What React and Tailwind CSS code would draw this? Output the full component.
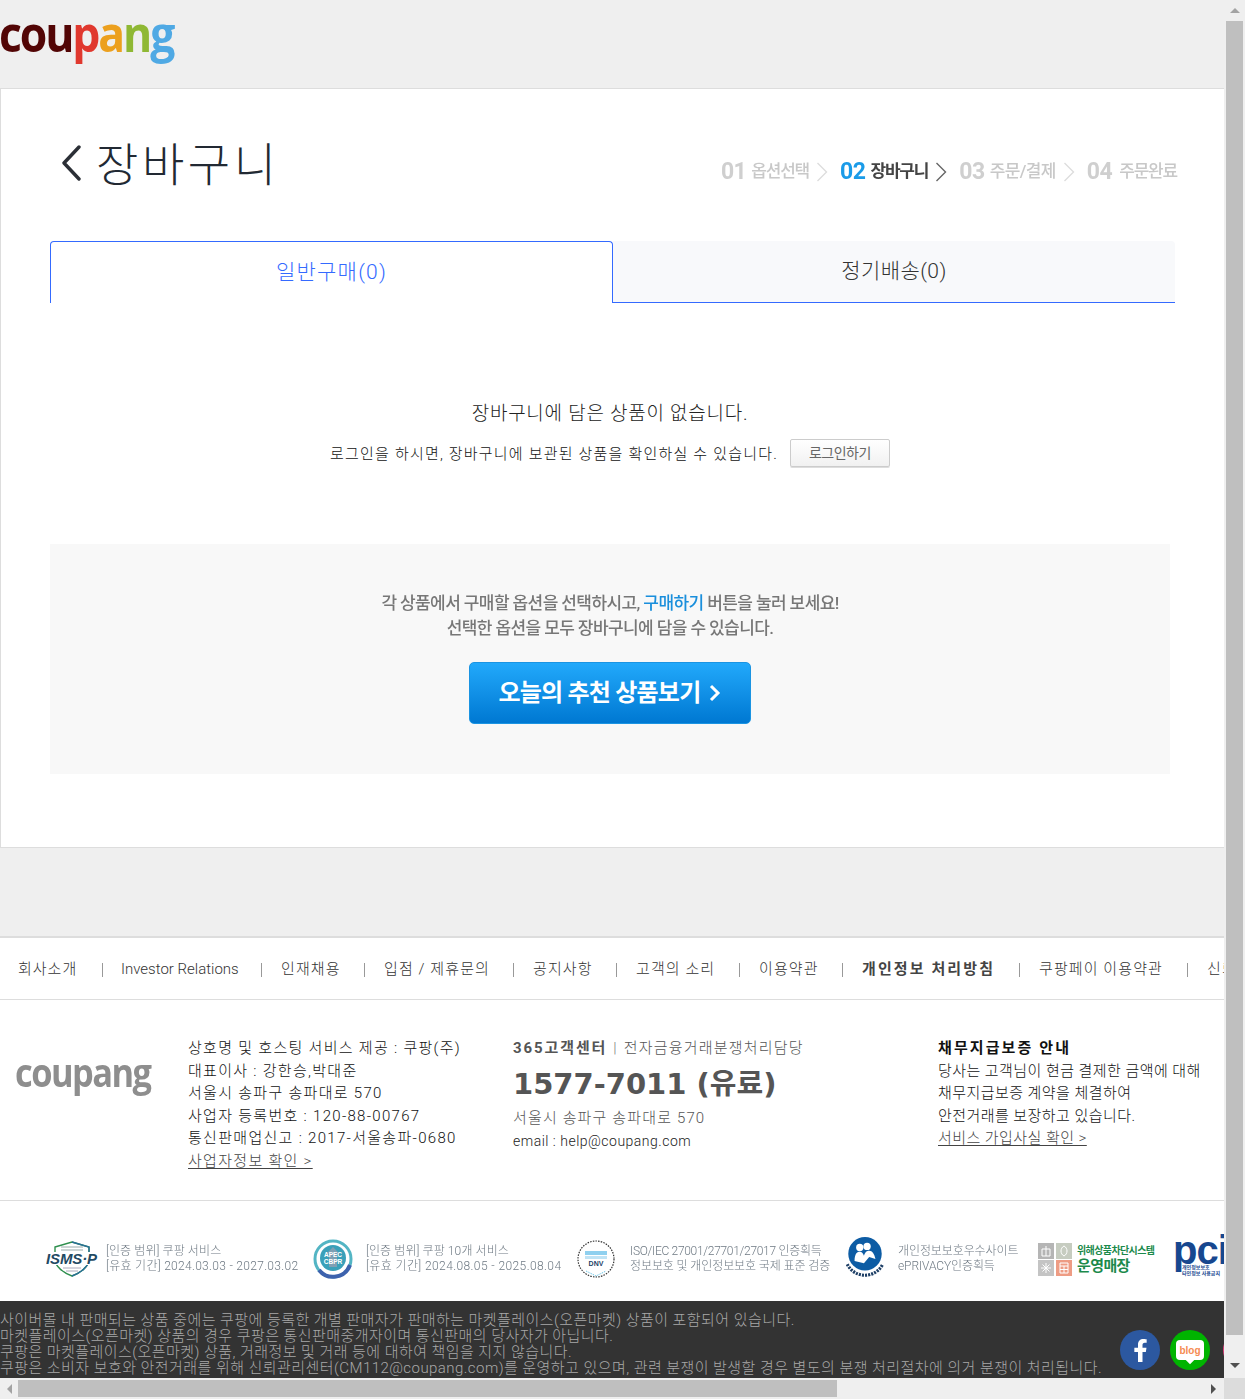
import React from 'react';
import { FaFacebookF } from 'react-icons/fa';

const navItems = [
  { label: '회사소개', cls: 'w-[103px] pl-[18px] tracking-[1px]' },
  { label: 'Investor Relations', cls: 'w-[159px] pl-[18px] tracking-[0px]' },
  { label: '인재채용', cls: 'w-[103px] pl-[19px] tracking-[1.1px]' },
  { label: '입점 / 제휴문의', cls: 'w-[149px] pl-[19px] tracking-[1.1px]' },
  { label: '공지사항', cls: 'w-[103px] pl-[19px] tracking-[1.1px]' },
  { label: '고객의 소리', cls: 'w-[123px] pl-[19px] tracking-[1.1px]' },
  { label: '이용약관', cls: 'w-[103px] pl-[19px] tracking-[1.1px]' },
  { label: '개인정보 처리방침', cls: 'w-[177px] pl-[19px] font-bold text-[#444] tracking-[2.1px]' },
  { label: '쿠팡페이 이용약관', cls: 'w-[168px] pl-[19px] tracking-[1.1px]' },
  { label: '신뢰관리센터', cls: 'w-[120px] pl-[19px] tracking-[1.1px]' },
];

const CoupangLogo = () => (
  <div className="-ml-[1px] origin-left scale-x-[0.89] font-['Open_Sans',sans-serif] text-[50px] font-bold leading-none tracking-[-2.4px] whitespace-nowrap">
    <span className="text-[#520505]">cou</span>
    <span className="text-[#e0382e]">p</span>
    <span className="text-[#eca01e]">a</span>
    <span className="text-[#8fb834]">n</span>
    <span className="text-[#4fa9e4]">g</span>
  </div>
);

const Step = ({ num, label, active, dark, last, labelCls = 'tracking-[-1.2px]', gapCls = 'gap-[5px]' }) => (
  <div className={`flex items-center blur-[0.4px] ${gapCls}`}>
    <span className={`text-[23px] font-bold leading-none tracking-[-0.5px] ${active ? 'text-[#1a9be8]' : 'text-[#cfcfcf]'}`}>{num}</span>
    <span className={`text-[17px] leading-none ${active ? 'font-bold text-[#444]' : 'font-medium text-[#c8c8c8]'} ${labelCls}`}>{label}</span>
    {!last && (
      <svg width="12" height="20" viewBox="0 0 12 20" fill="none" className="ml-[2px]">
        <path d="M1.5 1 L10.5 10 L1.5 19" stroke={dark ? '#666' : '#ddd'} strokeWidth="1.4" />
      </svg>
    )}
  </div>
);

const IsmsBadge = () => (
  <svg width="52" height="36" viewBox="0 0 52 36" className="shrink-0">
    <path d="M9 6 L26 1 L43 6 L43 18 C43 26 34 32 26 35 C18 32 9 26 9 18 Z" fill="#fff" stroke="#2f8f4e" strokeWidth="1.4" />
    <path d="M26 1 L43 6 L43 18 C43 26 34 32 26 35" fill="none" stroke="#2a6f97" strokeWidth="1.4" />
    <path d="M15 6h22M15 9h22" stroke="#9aa" strokeWidth="1" />
    <path d="M17 27h18M20 30h12" stroke="#aab" strokeWidth="1" />
    <rect x="0" y="11" width="52" height="13" fill="#fff" />
    <text x="0" y="23" fontFamily="Liberation Sans" fontSize="15" fontWeight="700" fontStyle="italic" fill="#1f4a63" textLength="51">ISMS·P</text>
  </svg>
);

const ApecBadge = () => (
  <svg width="40" height="40" viewBox="0 0 40 40" className="shrink-0">
    <circle cx="20" cy="20" r="18" fill="none" stroke="#53b5c4" strokeWidth="3" />
    <path d="M6 31 A18 18 0 0 0 37 26" fill="none" stroke="#3d62ad" strokeWidth="4" />
    <circle cx="20" cy="19" r="13" fill="#3aa0b9" />
    <path d="M20 8 L27 15 L24 15 L24 28 L16 28 L16 15 L13 15 Z" fill="#7f9fb4" />
    <text x="20" y="18" textAnchor="middle" fontFamily="Liberation Sans" fontSize="6.5" fontWeight="700" fill="#fff">APEC</text>
    <text x="20" y="25" textAnchor="middle" fontFamily="Liberation Sans" fontSize="6.5" fontWeight="700" fill="#fff">CBPR</text>
  </svg>
);

const DnvBadge = () => (
  <svg width="40" height="40" viewBox="0 0 40 40" className="shrink-0">
    <circle cx="20" cy="20" r="18" fill="none" stroke="#333" strokeWidth="1.2" strokeDasharray="1.5 1.2" />
    <rect x="9" y="12" width="22" height="4" fill="#8fd0ef" />
    <rect x="9" y="17" width="22" height="3" fill="#bfe3f5" />
    <text x="20" y="27" textAnchor="middle" fontFamily="Liberation Sans" fontSize="7" fontWeight="700" fill="#1d3f66">DNV</text>
    <path d="M10 32 L20 37 L30 32" fill="none" stroke="#6cc6e8" strokeWidth="1" strokeDasharray="1.5 1" />
  </svg>
);

const PrivacyBadge = () => (
  <svg width="44" height="46" viewBox="0 0 42 44" className="-ml-[2px] shrink-0">
    <circle cx="21" cy="17" r="16" fill="#0d5ca4" />
    <circle cx="16" cy="11" r="3.5" fill="#fff" />
    <circle cx="23" cy="10" r="3.5" fill="#fff" />
    <path d="M11 24 C11 16 14 15 16 15 C18 15 19 16 20 19 C21 15 23 14 25 14 C28 14 30 17 31 22 L25 20 L20 26 Z" fill="#fff" />
    <path d="M4 27 A19 19 0 0 0 38 27" fill="none" stroke="#1e3f66" strokeWidth="3" strokeDasharray="2 1" />
  </svg>
);

const SafeBadge = () => (
  <div className="flex w-[135px] shrink-0 items-center gap-[5px]">
    <svg width="34" height="33" viewBox="0 0 34 33" className="shrink-0">
      <rect width="16" height="16" fill="#b5b5b5" />
      <rect x="18" width="16" height="16" fill="#c6ccc0" />
      <rect y="17" width="16" height="16" fill="#c4c4c4" />
      <rect x="18" y="17" width="16" height="16" fill="#ee9c84" />
      <path d="M4 6h8v7H4zM8 3v10" stroke="#fff" fill="none" />
      <path d="M26 3c-4 2-4 8 0 10c4-2 4-8 0-10z" stroke="#fff" fill="none" />
      <path d="M8 20v10M3 25h10M4.500 21.500l7 7M11.500 21.500l-7 7" stroke="#fff" />
      <path d="M22 20h8v10h-8zM22 23h8M22 26.500h8M26 23v7" stroke="#fff" fill="none" />
    </svg>
    <div className="flex flex-col font-bold text-[#1c8a4c]">
      <span className="text-[10px] leading-[13px] tracking-[-0.6px] whitespace-nowrap">위해상품차단시스템</span>
      <span className="text-[15px] leading-[18px] tracking-[-0.6px] whitespace-nowrap">운영매장</span>
    </div>
  </div>
);

const PciBadge = () => (
  <div className="flex shrink-0 flex-col">
    <span className="h-[22px] font-['Liberation_Sans',sans-serif] text-[40px] font-bold leading-[16px] tracking-[-1px] text-[#17478f]">pci</span>
    <span className="ml-[9px] text-[5px] font-bold leading-[6px] text-[#17478f] whitespace-nowrap">개인정보보호<br />타인정보 사용금지</span>
  </div>
);

const CertText = ({ first, second, className, firstCls = '', secondCls = '' }) => (
  <div className={`shrink-0 text-[12px] font-light leading-[15px] text-[#6f7a84] whitespace-nowrap blur-[0.2px] ${className}`}>
    <div className={firstCls}>{first}</div>
    <div className={secondCls}>{second}</div>
  </div>
);

const App = () => {
  return (
    <div className="flex h-screen w-full flex-col overflow-hidden bg-[#efefef] font-['Roboto','Noto_Sans_CJK_KR',sans-serif]">
      <div className="flex h-[1378px] shrink-0">
        <div className="relative w-[1224px] shrink-0 overflow-hidden">
          {/* Top logo */}
          <div className="h-[88px] overflow-hidden pt-[8px]">
            <CoupangLogo />
          </div>

          {/* Cart card */}
          <div className="h-[760px] border-y border-l border-[#dddddd] bg-white pl-[49px]">
            <div className="flex h-[152px] w-[1127px] items-start justify-between">
              <div className="flex items-center gap-[15px] pt-[42px]">
                <svg width="20" height="36" viewBox="0 0 20 36" fill="none" className="ml-[11px]">
                  <path d="M18 2 L3 18 L18 34" stroke="#2b2f36" strokeWidth="3.4" strokeLinecap="round" strokeLinejoin="round" />
                </svg>
                <h1 className="pb-[4px] font-['Noto_Sans_CJK_KR',sans-serif] text-[46px] font-light leading-[60px] tracking-[3.6px] text-[#222933]">장바구니</h1>
              </div>
              <div className="flex items-center gap-[12px] pt-[71px]">
                <Step num="01" label="옵션선택" />
                <Step num="02" label="장바구니" active dark />
                <Step num="03" label="주문/결제" labelCls="tracking-[-0.6px]" />
                <Step num="04" label="주문완료" last gapCls="gap-[7px]" />
              </div>
            </div>

            {/* Tabs */}
            <div className="flex h-[62px] w-[1125px] text-[21px] font-light">
              <div className="flex w-[563px] items-center justify-center rounded-t-[4px] border-x border-t border-[#346aff] bg-white tracking-[1.2px] text-[#346aff]">
                일반구매(0)
              </div>
              <div className="flex w-[562px] items-center justify-center rounded-tr-[4px] border-b border-[#346aff] bg-[#f8f9fb] tracking-[0.4px] text-[#333]">
                정기배송(0)
              </div>
            </div>

            {/* Empty state */}
            <div className="flex h-[241px] w-[1120px] flex-col items-center pt-[97px]">
              <p className="text-[19px] font-light leading-[28px] tracking-[0.75px] text-[#222]">장바구니에 담은 상품이 없습니다.</p>
              <div className="mt-[11px] flex items-center gap-[12px]">
                <p className="text-[15px] font-light tracking-[1.2px] text-[#111]">로그인을 하시면, 장바구니에 보관된 상품을 확인하실 수 있습니다.</p>
                <button className="mb-[2px] h-[28px] w-[100px] rounded-[2px] border border-[#cccccc] bg-gradient-to-b from-white to-[#f1f1f1] text-[14px] tracking-[-0.5px] text-[#666] shadow-[0_1px_0_#ddd]">로그인하기</button>
              </div>
            </div>

            {/* Recommendation box */}
            <div className="flex h-[230px] w-[1120px] flex-col items-center bg-[#f8f8f8] pt-[47px]">
              <div className="text-center text-[17px] font-medium leading-[25px] tracking-[-0.6px] text-[#777] blur-[0.3px]">
                <p>각 상품에서 구매할 옵션을 선택하시고, <span className="text-[#1a8fdc]">구매하기</span> 버튼을 눌러 보세요!</p>
                <p>선택한 옵션을 모두 장바구니에 담을 수 있습니다.</p>
              </div>
              <button className="mt-[21px] flex h-[62px] w-[282px] items-center justify-center gap-[9px] rounded-[5px] border border-[#1b94e2] bg-gradient-to-b from-[#21a9fb] to-[#0078d2] text-[24px] font-bold tracking-[-0.8px] text-white">
                오늘의 추천 상품보기
                <svg width="12" height="18" viewBox="0 0 12 18" fill="none">
                  <path d="M2 2 L9 9 L2 16" stroke="#fff" strokeWidth="3" />
                </svg>
              </button>
            </div>
          </div>

          <div className="h-[88px]" />

          {/* Footer */}
          <div className="border-t-2 border-[#dddddd] bg-white">
            <div className="flex h-[62px] items-center border-b border-[#dddddd] pt-[2px] text-[15px] font-light text-[#333] whitespace-nowrap">
              {navItems.map((item, i) => (
                <div key={item.label} className={`flex h-[14px] shrink-0 items-center ${i < navItems.length - 1 ? 'border-r border-[#999]' : ''} ${item.cls}`}>
                  {item.label}
                </div>
              ))}
            </div>

            <div className="flex h-[201px] border-b border-[#dddddd] pt-[37px]">
              <div className="w-[188px] shrink-0 pl-[15px] pt-[15px]">
                <div className="origin-left scale-x-[0.86] font-['Open_Sans',sans-serif] text-[40px] font-bold leading-none tracking-[-1.8px] text-[#8e8e8e]">coupang</div>
              </div>
              <div className="w-[325px] shrink-0 text-[15px] font-light leading-[22.6px] tracking-[1.3px] text-[#111] whitespace-nowrap">
                <p>상호명 및 호스팅 서비스 제공 : 쿠팡(주)</p>
                <p>대표이사 : 강한승,박대준</p>
                <p>서울시 송파구 송파대로 570</p>
                <p>사업자 등록번호 : 120-88-00767</p>
                <p>통신판매업신고 : 2017-서울송파-0680</p>
                <a className="text-[#444] underline underline-offset-2">사업자정보 확인 &gt;</a>
              </div>
              <div className="w-[425px] shrink-0 whitespace-nowrap text-[#555]">
                <p className="text-[15px] font-light leading-[22px] tracking-[1.2px]">
                  <span className="font-bold tracking-[1.9px]">365고객센터</span>
                  <span className="mx-[6px] text-[#777]">|</span>
                  전자금융거래분쟁처리담당
                </p>
                <p className="mt-[3px] font-['DejaVu_Sans','Noto_Sans_CJK_KR',sans-serif] text-[29px] font-bold leading-[44px] text-[#555]">1577-7011 (유료)</p>
                <p className="pt-[1px] text-[15px] font-light leading-[23px] tracking-[1.15px]">서울시 송파구 송파대로 570</p>
                <p className="text-[14px] font-light leading-[22px] tracking-[0.5px] text-[#222]">email : help@coupang.com</p>
              </div>
              <div className="text-[15px] font-light leading-[22.6px] tracking-[0.45px] text-[#111] whitespace-nowrap">
                <p className="font-bold tracking-[2.1px]">채무지급보증 안내</p>
                <p>당사는 고객님이 현금 결제한 금액에 대해</p>
                <p>채무지급보증 계약을 체결하여</p>
                <p>안전거래를 보장하고 있습니다.</p>
                <a className="text-[#444] underline underline-offset-2">서비스 가입사실 확인 &gt;</a>
              </div>
            </div>

            <div className="flex h-[100px] items-center pt-[16px]">
              <div className="ml-[46px]"><IsmsBadge /></div>
              <CertText className="ml-[8px] w-[207px]" firstCls="tracking-[0.1px]" secondCls="tracking-[0.3px]" first="[인증 범위] 쿠팡 서비스" second="[유효 기간] 2024.03.03 - 2027.03.02" />
              <ApecBadge />
              <CertText className="ml-[13px] w-[210px]" firstCls="tracking-[0.1px]" secondCls="tracking-[0.4px]" first="[인증 범위] 쿠팡 10개 서비스" second="[유효 기간] 2024.08.05 - 2025.08.04" />
              <DnvBadge />
              <CertText className="ml-[14px] w-[215px]" firstCls="tracking-[-0.3px]" secondCls="tracking-[-0.1px]" first="ISO/IEC 27001/27701/27017 인증획득" second="정보보호 및 개인정보보호 국제 표준 검증" />
              <PrivacyBadge />
              <CertText className="ml-[11px] w-[140px] tracking-[-0.1px]" first="개인정보보호우수사이트" second="ePRIVACY인증획득" />
              <SafeBadge />
              <PciBadge />
            </div>

            <div className="h-[77px] bg-[#333333] pt-[11px] text-[15px] font-light leading-[16px] tracking-[0.45px] text-[#a8a8a8] whitespace-nowrap">
              <p>사이버몰 내 판매되는 상품 중에는 쿠팡에 등록한 개별 판매자가 판매하는 마켓플레이스(오픈마켓) 상품이 포함되어 있습니다.</p>
              <p>마켓플레이스(오픈마켓) 상품의 경우 쿠팡은 통신판매중개자이며 통신판매의 당사자가 아닙니다.</p>
              <p>쿠팡은 마켓플레이스(오픈마켓) 상품, 거래정보 및 거래 등에 대하여 책임을 지지 않습니다.</p>
              <p>쿠팡은 소비자 보호와 안전거래를 위해 신뢰관리센터(CM112@coupang.com)를 운영하고 있으며, 관련 분쟁이 발생할 경우 별도의 분쟁 처리절차에 의거 분쟁이 처리됩니다.</p>
            </div>
          </div>

          {/* Social buttons float over the notice */}
          <div className="absolute bottom-[8px] left-[1120px] flex gap-[10px]">
            <div className="flex h-[40px] w-[40px] items-center justify-center rounded-full bg-[#2c58a0] text-white">
              <FaFacebookF size={23} />
            </div>
            <div className="flex h-[40px] w-[40px] items-center justify-center rounded-full bg-[#00b400]">
              <div className="relative flex h-[20px] w-[28px] items-center justify-center rounded-[4px] bg-white font-['Liberation_Sans',sans-serif] text-[10px] font-bold text-[#f58b52]">
                blog
                <span className="absolute -bottom-[3px] left-[11px] h-[6px] w-[6px] rotate-45 bg-white" />
              </div>
            </div>
            <div className="ml-[3px] h-[40px] w-[40px] rounded-full bg-[#e3407f]" />
          </div>
        </div>

        {/* Vertical scrollbar */}
        <div className="flex w-[21px] shrink-0 flex-col items-center bg-[#efefef]">
          <div className="flex h-[21px] items-center">
            <span className="h-0 w-0 border-x-[5px] border-b-[5px] border-x-transparent border-b-[#a3a3a3]" />
          </div>
          <div className="h-[1314px] w-[17px] bg-[#bfbfbf]" />
          <div className="flex h-[43px] items-center pt-[17px]">
            <span className="h-0 w-0 border-x-[5px] border-t-[5px] border-x-transparent border-t-[#505050]" />
          </div>
        </div>
      </div>

      {/* Horizontal scrollbar */}
      <div className="flex h-[21px] shrink-0">
        <div className="flex w-[1224px] items-center">
          <div className="flex w-[18px] justify-center">
            <span className="h-0 w-0 border-y-[5px] border-r-[5px] border-y-transparent border-r-[#a3a3a3]" />
          </div>
          <div className="h-[17px] w-[819px] bg-[#bfbfbf]" />
          <div className="flex flex-1 justify-end pr-[8px]">
            <span className="h-0 w-0 border-y-[5px] border-l-[5px] border-y-transparent border-l-[#505050]" />
          </div>
        </div>
        <div className="flex-1 bg-[#dcdcdc]" />
      </div>
    </div>
  );
};

export default App;
